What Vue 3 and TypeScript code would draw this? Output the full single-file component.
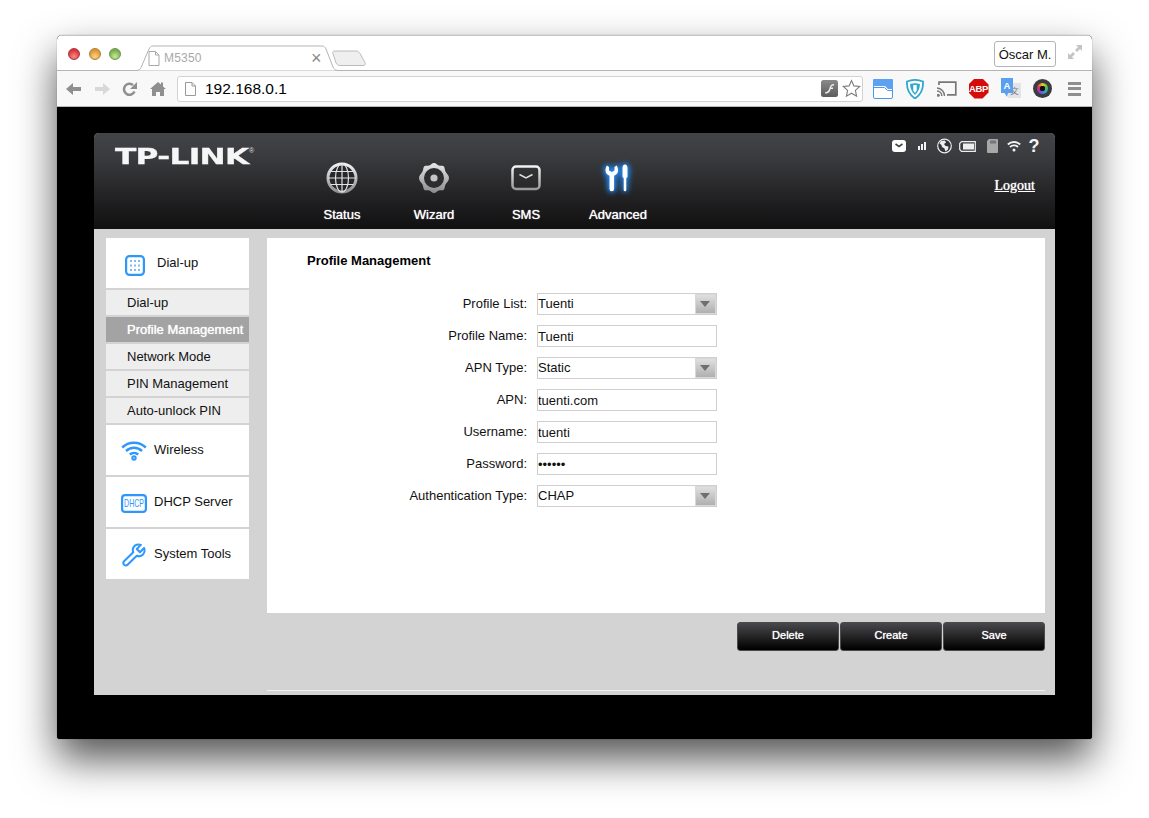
<script setup lang="ts">
const navItems = ['Status', 'Wizard', 'SMS', 'Advanced']
const subItems = ['Dial-up', 'Profile Management', 'Network Mode', 'PIN Management', 'Auto-unlock PIN']
const fields = [
  { label: 'Profile List:', value: 'Tuenti', kind: 'select' },
  { label: 'Profile Name:', value: 'Tuenti', kind: 'text' },
  { label: 'APN Type:', value: 'Static', kind: 'select' },
  { label: 'APN:', value: 'tuenti.com', kind: 'text' },
  { label: 'Username:', value: 'tuenti', kind: 'text' },
  { label: 'Password:', value: 'tuenti', kind: 'password' },
  { label: 'Authentication Type:', value: 'CHAP', kind: 'select' },
]
const actions = ['Delete', 'Create', 'Save']
</script>

<template>
  <div class="stage">
    <div class="window">
      <div class="titlebar">
        <div class="lights">
          <span class="light red"></span>
          <span class="light amber"></span>
          <span class="light green"></span>
        </div>
        <div class="tab">
          <svg class="tab-shape" width="236" height="26" viewBox="0 0 236 26">
            <path d="M0 25.500H4c3 0 4-1 5-3L17 4c1-2 2-3 4-3H190c2 0 3 1 4 3l7 18c1 2 2 3.500 5 3.500H236" fill="#fff" stroke="#b4b4b4" />
            <path d="M207 6h17c2 0 3 1 4 2.500l5 9c.8 1.800 0 3-2 3h-23c-2 0-3-.8-4-2.500l-3-9.500c-.6-1.500 0-2.500 2-2.500z" fill="#efefef" stroke="#bcbcbc" />
          </svg>
          <svg class="tab-page" width="12" height="15" viewBox="0 0 12 15"><path d="M1 .5h6.500L11 4v10.500H1z M7.500 .5V4H11" fill="#fff" stroke="#a8a8a8" /></svg>
          <span class="tab-title">M5350</span>
          <span class="tab-close">×</span>
        </div>
        <div class="spacer"></div>
        <div class="profile">Óscar M.</div>
        <svg class="fs" width="16" height="16" viewBox="0 0 16 16">
          <path d="M9 1h6v6l-2-2-3 3-2-2 3-3z M7 15H1V9l2 2 3-3 2 2-3 3z" fill="#c4c4c4" />
        </svg>
      </div>

      <div class="toolbar">
        <svg class="tb" width="18" height="16" viewBox="0 0 18 16"><path d="M1 8l7-6v4h8v4H8v4z" fill="#8f8f8f" /></svg>
        <svg class="tb" width="18" height="16" viewBox="0 0 18 16"><path d="M17 8l-7-6v4H2v4h8v4z" fill="#d8d8d8" /></svg>
        <svg class="tb" width="18" height="16" viewBox="0 0 18 16"><path d="M13.500 10.500A5.500 5.500 0 1 1 12 4" fill="none" stroke="#8f8f8f" stroke-width="2.600" /><path d="M16 1v7h-7z" fill="#8f8f8f" /></svg>
        <svg class="tb" width="18" height="16" viewBox="0 0 18 16"><path d="M9 1l3 2.600V1.500h2v3.900L17 8h-2v7h-4v-4H7v4H3V8H1z" fill="#8f8f8f" /></svg>
        <div class="omnibox">
          <svg width="11" height="14" viewBox="0 0 11 14"><path d="M.5 .5h6.500L10.500 4v9.500H.5z M7 .5V4h3.500" fill="#fdfdfd" stroke="#9a9a9a" /></svg>
          <span class="url">192.168.0.1</span>
          <span class="spacer"></span>
          <svg width="17" height="17" viewBox="0 0 17 17">
            <defs><linearGradient id="fl" x1="0" y1="0" x2="0" y2="1"><stop offset="0" stop-color="#8a8a8a" /><stop offset="1" stop-color="#5c5c5c" /></linearGradient></defs>
            <rect width="17" height="17" rx="2.500" fill="url(#fl)" />
            <path d="M13 4c-3 0-4 2-4.500 4S7 12 4 12.500v1c4 0 5-2 5.600-4.500H12V7.500H10C10.400 6 11.400 5.500 13 5.500z" fill="#eee" />
          </svg>
          <svg class="star" width="19" height="19" viewBox="0 0 19 19"><path d="M9.500 1.500l2.400 5.400 5.800.6-4.300 3.900 1.200 5.800-5.100-3-5.100 3 1.200-5.800L1.300 7.500l5.800-.6z" fill="#fff" stroke="#7d7d7d" stroke-width="1.100" /></svg>
        </div>
        <div class="exts">
          <div class="ext">
            <svg width="20" height="20" viewBox="0 0 20 20">
              <rect x=".5" y=".5" width="19" height="19" rx="1.500" fill="#fff" stroke="#4a97ee" />
              <path d="M1 0h18a1 1 0 0 1 1 1v9h-5l-3-3H1.500L0 8V1a1 1 0 0 1 1-1z" fill="#5da2f1" />
              <path d="M.5 8.500H11.500l3 3H19.500" fill="none" stroke="#4a97ee" />
            </svg>
          </div>
          <div class="ext">
            <svg width="18" height="20" viewBox="0 0 18 20">
              <path d="M1 2.500C6 .5 12 .5 17 2.500c.5 7-2 13-8 17-6-4-8.500-10-8-17z" fill="#fff" stroke="#2fa8cf" stroke-width="1.800" />
              <path d="M4 5c3-.9 7-.9 10 0-.2 4.500-2 8.300-5 11-3-2.700-4.800-6.500-5-11z" fill="#2fa8cf" />
              <path d="M7.300 6h3.400v5.500L9 14l-1.700-2.500z" fill="#fff" />
            </svg>
          </div>
          <div class="ext">
            <svg width="20" height="16" viewBox="0 0 20 16"><path d="M2 4V1.200h16.800v12.600H10" fill="none" stroke="#777" stroke-width="1.700" /><path d="M0 7a8 8 0 0 1 7.500 8M0 10a5 5 0 0 1 4.800 5" fill="none" stroke="#777" stroke-width="1.400" /><circle cx="1.300" cy="14.300" r="1.500" fill="#777" /></svg>
          </div>
          <div class="ext">
            <div class="abp">ABP</div>
          </div>
          <div class="ext">
            <svg width="20" height="21" viewBox="0 0 20 21">
              <path d="M7 5h13v15H7z" fill="#e2e4e6" />
              <text x="13.500" y="16" font-size="8.500" fill="#777" text-anchor="middle" font-family="'Noto Sans CJK SC', sans-serif">文</text>
              <path d="M0 0h12v15H7l-1 4-2.500-4H0z" fill="#5a9ff0" />
              <text x="6" y="11" font-size="9.500" font-weight="700" fill="#fff" text-anchor="middle" font-family="'Liberation Sans', sans-serif">A</text>
            </svg>
          </div>
          <div class="ext">
            <div class="lens"><div class="lens-ring"></div></div>
          </div>
          <div class="ext">
            <div class="burger"><i></i><i></i><i></i></div>
          </div>
        </div>
      </div>

      <div class="viewport">
        <div class="router">
          <header class="head">
            <div class="logo"><span class="logo-text">TP-LINK</span><sup class="logo-r">®</sup></div>
            <nav class="nav">
              <div v-for="(item, i) in navItems" :key="item" class="nav-item">
                <div class="nav-icon">
                  <svg v-if="i === 0" width="32" height="32" viewBox="0 0 32 32">
                    <defs><linearGradient id="mt" x1="0" y1="0" x2="0" y2="1"><stop offset="0" stop-color="#f0f0f0" /><stop offset="1" stop-color="#8d8d8d" /></linearGradient></defs>
                    <circle cx="16" cy="16" r="14" fill="#27272a" stroke="url(#mt)" stroke-width="3" />
                    <g fill="none" stroke="#e2e2e2" stroke-width="1.200">
                      <ellipse cx="16" cy="16" rx="6.500" ry="14" />
                      <path d="M16 2v28M2 16h28M4.500 9.500h23M4.500 22.500h23" />
                    </g>
                  </svg>
                  <svg v-else-if="i === 1" width="32" height="32" viewBox="0 0 32 32">
                    <defs><linearGradient id="mw" x1="0" y1="0" x2="0" y2="1"><stop offset="0" stop-color="#e8e8e8" /><stop offset="1" stop-color="#8a8a8a" /></linearGradient></defs>
                    <path d="M16 1c2 0 3 2 5 2.500s4-.5 5 1 .5 3 1.500 5 3.500 3.500 3.500 6.500-2.500 4.500-3.500 6.500-.5 3.500-1.500 5-3 .5-5 1-3 2.500-5 2.500-3-2-5-2.500-4 .5-5-1-.5-3-1.500-5S1 19 1 16s2.500-4.500 3.500-6.500.5-3.500 1.500-5 3-.5 5-1 3-2.500 5-2.500z" fill="url(#mw)" />
                    <circle cx="16" cy="16" r="10" fill="#2d2d30" />
                    <circle cx="16" cy="16" r="3.600" fill="#c4c4c4" />
                  </svg>
                  <svg v-else-if="i === 2" width="30" height="26" viewBox="0 0 30 26">
                    <defs><linearGradient id="ms" x1="0" y1="0" x2="0" y2="1"><stop offset="0" stop-color="#f2f2f2" /><stop offset="1" stop-color="#9a9a9a" /></linearGradient></defs>
                    <rect x="1.500" y="1.500" width="27" height="22.500" rx="3.500" fill="none" stroke="url(#ms)" stroke-width="2.500" />
                    <path d="M8.500 9.500L15 13l6.500-3.500" fill="none" stroke="#e0e0e0" stroke-width="1.500" />
                  </svg>
                  <svg v-else class="glow" width="26" height="28" viewBox="0 0 26 28">
                    <path d="M2 1.500C.8 3 .5 5 .5 6.500c0 2.500 1.500 4.300 4 5.200V25a2.300 2.300 0 0 0 4.600 0V11.700c2.500-.9 4-2.700 4-5.200 0-1.500-.3-3.500-1.500-5L9.500 3v3.500L6.800 8 4 6.500V3z" fill="#fff" />
                    <path d="M17.500 4c0-2 1-3.500 2.500-3.500S22.500 2 22.500 4v8.500c0 .8-.4 1.300-1.200 1.500v12a1.300 1.300 0 0 1-2.600 0V14c-.8-.2-1.200-.7-1.200-1.500z" fill="#fff" />
                  </svg>
                </div>
                <span class="nav-label">{{ item }}</span>
              </div>
            </nav>
            <div class="head-right">
              <div class="status-icons">
                <svg width="14" height="12" viewBox="0 0 14 12"><rect width="14" height="12" rx="3" fill="#fff" /><path d="M3.500 4L7 6.500 10.500 4" fill="none" stroke="#444" stroke-width="1.600" /></svg>
                <svg class="st-sig" width="8" height="8" viewBox="0 0 8 8"><path d="M0 4h2v4H0zM3 2h2v6H3zM6 0h2v8H6z" fill="#f2f2f2" /></svg>
                <svg class="st-globe" width="15" height="16" viewBox="0 0 15 16"><circle cx="7.500" cy="8" r="6.800" fill="#33343a" stroke="#eee" stroke-width="1.200" /><path d="M4 3l4-.5 1 2-2 1.500 1.500 2 3 .5-.5 3-2.500 2-1-3-2.500-1.500-.5-2-2-1.500z" fill="#eee" /></svg>
                <svg class="st-bat" width="17" height="11" viewBox="0 0 17 11"><path d="M2.500 .7h13.800v9.600H2.500L.7 8.500v-6z" fill="none" stroke="#eee" stroke-width="1.200" /><rect x="4" y="2.500" width="11" height="6" fill="#eee" /></svg>
                <svg class="st-sd" width="11" height="14" viewBox="0 0 11 14"><path d="M2 0h8a1 1 0 0 1 1 1v12a1 1 0 0 1-1 1H1a1 1 0 0 1-1-1V2z" fill="#a8a8a8" /><path d="M4 1.500v3M6 1.500v3M8 1.500v3" stroke="#3b3b3f" stroke-width=".9" /></svg>
                <svg class="st-wifi" width="14" height="12" viewBox="0 0 14 12"><path d="M.8 4.500a9 9 0 0 1 12.400 0M3 7a5.800 5.800 0 0 1 8 0" fill="none" stroke="#f2f2f2" stroke-width="1.800" /><circle cx="7" cy="10" r="1.500" fill="#f2f2f2" /></svg>
                <span class="st-q">?</span>
              </div>
              <a class="logout">Logout</a>
            </div>
          </header>

          <div class="body">
            <aside class="side">
              <div class="side-head first">
                <svg class="ic-dial" width="20" height="21" viewBox="0 0 20 21">
                  <rect x="1.100" y="1.100" width="17.800" height="18.800" rx="3.500" fill="#fff" stroke="#2e97fb" stroke-width="2.200" />
                  <g fill="#7dbcf6">
                    <rect x="5" y="5" width="2" height="2" /><rect x="9" y="5" width="2" height="2" /><rect x="13" y="5" width="2" height="2" />
                    <rect x="5" y="9.500" width="2" height="2" /><rect x="9" y="9.500" width="2" height="2" /><rect x="13" y="9.500" width="2" height="2" />
                    <rect x="5" y="14" width="2" height="2" /><rect x="9" y="14" width="2" height="2" /><rect x="13" y="14" width="2" height="2" />
                  </g>
                </svg>
                <span class="first-label">Dial-up</span>
              </div>
              <div v-for="s in subItems" :key="s" class="sub" :class="{ active: s === 'Profile Management' }">{{ s }}</div>
              <div class="side-head">
                <svg class="ic" width="26" height="22" viewBox="0 0 26 22">
                  <g fill="none" stroke="#2e97fb" stroke-width="2.500">
                    <path d="M1.200 8.500a17 17 0 0 1 23.600 0" />
                    <path d="M5 12a11.500 11.500 0 0 1 16 0" />
                    <path d="M8.800 15.500a6.300 6.300 0 0 1 8.400 0" />
                    <circle cx="13" cy="19" r="1.700" stroke-width="2" />
                  </g>
                </svg>
                <span>Wireless</span>
              </div>
              <div class="side-head">
                <svg class="ic dhcp" width="26" height="19" viewBox="0 0 26 19">
                  <rect x="1.100" y="1.100" width="23.800" height="16.800" rx="3" fill="#fff" stroke="#2e97fb" stroke-width="2.200" />
                  <text transform="translate(13 12.800) scale(.7 1)" text-anchor="middle" font-size="10" fill="#2e97fb" font-family="'Liberation Sans', sans-serif">DHCP</text>
                </svg>
                <span>DHCP Server</span>
              </div>
              <div class="side-head">
                <svg class="ic tool" width="24" height="24" viewBox="0 0 26 26">
                  <path d="M24 5.500l-4.500 4.500-3.500-3.500L20.500 2c-3-1-6.500 0-8 2.500-1 1.800-1 3.800-.3 5.500L2.500 19.500c-1.300 1.300-1.300 2.800-.2 4 1.200 1.100 2.800 1.100 4-.2L16 13.800c1.800.7 3.800.7 5.500-.3 2.500-1.500 3.500-5 2.500-8z" fill="#fff" stroke="#2e97fb" stroke-width="2.200" stroke-linejoin="round" />
                </svg>
                <span>System Tools</span>
              </div>
            </aside>

            <div class="content">
              <main class="panel">
                <h1 class="title">Profile Management</h1>
                <div class="form">
                  <template v-for="f in fields" :key="f.label">
                    <label class="flabel">{{ f.label }}</label>
                    <div v-if="f.kind === 'select'" class="control select">
                      <span class="val">{{ f.value }}</span>
                      <span class="arrow"></span>
                    </div>
                    <input v-else class="control input" :type="f.kind" :value="f.value" readonly />
                  </template>
                </div>
              </main>
              <div class="actions">
                <button v-for="a in actions" :key="a" class="btn" type="button">{{ a }}</button>
              </div>
              <div class="rule"></div>
            </div>
          </div>
        </div>
      </div>
    </div>
  </div>
</template>

<style>
html, body { margin: 0; background: #fff; }
</style>

<style scoped>
.stage {
  width: 1149px;
  height: 818px;
  padding: 35px 57px 79px 57px;
  box-sizing: border-box;
  overflow: hidden;
  font-family: "Liberation Sans", Arial, sans-serif;
  font-size: 13px;
  color: #111;
}
.window {
  width: 1035px;
  height: 704px;
  border-radius: 5px 5px 3px 3px;
  box-shadow: 0 20px 40px rgba(0, 0, 0, 0.68), 0 0 1px rgba(0, 0, 0, 0.5);
  display: flex;
  flex-direction: column;
  overflow: hidden;
  background: #000;
}
.spacer { flex: 1; }

.titlebar {
  height: 36px;
  flex: none;
  background: #fff;
  border-top: 1px solid #c4c4c4;
  box-sizing: border-box;
  display: flex;
  align-items: flex-start;
  position: relative;
  box-shadow: inset 0 -1px 0 #b4b4b4;
}
.lights { display: flex; gap: 8.500px; padding: 12px 0 0 11px; width: 64px; box-sizing: border-box; flex: none; }
.light {
  width: 12px;
  height: 12px;
  border-radius: 50%;
  box-sizing: border-box;
  flex: none;
}
.red { background: radial-gradient(circle at 50% 75%, #fb8a8a, #d8333a 70%); border: 1px solid #a8383c; }
.amber { background: radial-gradient(circle at 50% 75%, #fcd38a, #dd9530 70%); border: 1px solid #a9813a; }
.green { background: radial-gradient(circle at 50% 75%, #c9e89a, #78ac4c 70%); border: 1px solid #6f9552; }
.tab {
  width: 236px;
  height: 26px;
  margin: 9px 0 0 11px;
  position: relative;
  display: flex;
  align-items: center;
  flex: none;
}
.tab-shape { position: absolute; left: 0; top: 0; }
.tab-page { position: relative; margin-left: 16px; }
.tab-title { position: relative; margin-left: 4px; font-size: 12px; color: #a9a9a9; letter-spacing: 0.2px; }
.tab-close { position: absolute; left: 179px; top: 3px; font-size: 18px; line-height: 20px; color: #888; }
.profile {
  width: 62px;
  height: 26px;
  margin-top: 5px;
  border: 1px solid #b4b4b4;
  border-radius: 3px;
  box-sizing: border-box;
  font-size: 13px;
  line-height: 25px;
  text-align: center;
  color: #111;
  background: #fff;
}
.fs { margin: 8px 9px 0 11px; }

.toolbar {
  height: 36px;
  flex: none;
  background: #f8f8f8;
  border-bottom: 1px solid #b8b8b8;
  box-sizing: border-box;
  display: flex;
  align-items: center;
  padding-left: 8px;
}
.tb { margin-right: 10px; flex: none; }
.omnibox {
  width: 686px;
  height: 26px;
  flex: none;
  background: #fff;
  border: 1px solid #d2d2d2;
  border-radius: 3px;
  box-sizing: border-box;
  display: flex;
  align-items: center;
  padding: 0 1px 0 7px;
}
.url { margin-left: 9px; font-size: 15.500px; color: #000; }
.star { margin: 0 0 0 4px; }
.exts { display: flex; margin-left: 3.500px; }
.ext {
  width: 32px;
  flex: none;
  display: flex;
  justify-content: center;
  align-items: center;
}
.abp {
  width: 20px;
  height: 20px;
  background: #d40c0c;
  clip-path: polygon(30% 0, 70% 0, 100% 30%, 100% 70%, 70% 100%, 30% 100%, 0 70%, 0 30%);
  color: #fff;
  font-size: 9.500px;
  font-weight: 700;
  line-height: 20px;
  text-align: center;
  letter-spacing: -0.3px;
}
.lens {
  width: 19px;
  height: 19px;
  border-radius: 50%;
  background: #3a3c42;
  display: flex;
  align-items: center;
  justify-content: center;
}
.lens-ring {
  width: 11px;
  height: 11px;
  border-radius: 50%;
  box-sizing: border-box;
  background:
    radial-gradient(circle, #111 0 2.500px, transparent 3px),
    conic-gradient(#f3c91f, #54c43a, #22a6d8, #8d3bd0, #e0305a, #f3c91f);
}
.burger { display: flex; flex-direction: column; gap: 2.500px; }
.burger i { display: block; width: 13px; height: 3px; background: #8e8e8e; }

.viewport {
  flex: 1;
  background: #000;
  padding: 26px 37px 44px 37px;
  min-height: 0;
}
.router {
  height: 562px;
  width: 961px;
  display: flex;
  flex-direction: column;
  background: #d3d3d3;
  border-radius: 5px 5px 0 0;
  overflow: hidden;
}
.head {
  height: 96px;
  flex: none;
  background: linear-gradient(#434448 0%, #3a3b3e 25%, #232325 65%, #101011 100%);
  position: relative;
  display: flex;
}
.logo { width: 202px; flex: none; padding: 13px 0 0 21px; box-sizing: border-box; position: relative; }
.logo-text {
  display: inline-block;
  font-family: "DejaVu Sans", sans-serif;
  font-weight: 700;
  font-size: 22px;
  line-height: 22px;
  color: #f6f6f6;
  transform: scaleX(1.42);
  transform-origin: left center;
  letter-spacing: -0.5px;
  -webkit-text-stroke: 0.3px #f6f6f6;
}
.logo-r { position: absolute; left: 155px; top: 14px; font-size: 7px; color: #ddd; line-height: 8px; }
.nav { display: flex; }
.nav-item {
  width: 92px;
  display: flex;
  flex-direction: column;
  align-items: center;
}
.nav-icon { height: 32px; margin-top: 29px; display: flex; align-items: center; justify-content: center; }
.glow { filter: drop-shadow(0 0 3px #1f8fff) drop-shadow(0 0 2px #1f8fff); }
.nav-label {
  margin-top: 13px;
  color: #fff;
  font-size: 13px;
  line-height: 16px;
  text-shadow: 0 0 1px #fff;
}
.head-right {
  position: absolute;
  right: 0;
  top: 0;
  width: 170px;
  height: 96px;
}
.status-icons {
  display: flex;
  align-items: center;
  justify-content: flex-end;
  height: 16px;
  padding: 5px 15px 0 0;
}
.st-sig { margin-left: 12px; }
.st-globe { margin-left: 11px; }
.st-bat { margin-left: 7px; }
.st-sd { margin-left: 11px; }
.st-wifi { margin-left: 9px; }
.st-q { margin-left: 7px; color: #f4f4f4; font-weight: 700; font-size: 18px; line-height: 16px; width: 12px; text-align: center; }
.logout {
  position: absolute;
  right: 20px;
  top: 45px;
  font-family: "Liberation Serif", serif;
  font-size: 14px;
  line-height: 16px;
  color: #fff;
  text-decoration: underline;
  text-shadow: 0 0 1px #fff;
}

.body {
  flex: 1;
  display: flex;
  padding: 9px 10px 0 12px;
  gap: 18px;
  min-height: 0;
}
.side { width: 143px; flex: none; display: flex; flex-direction: column; gap: 2px; }
.side-head {
  height: 50px;
  flex: none;
  background: #fff;
  display: flex;
  align-items: center;
  padding-left: 15px;
  box-sizing: border-box;
}
.ic { flex: none; margin-right: 7px; }
.tool { margin-left: 1px; margin-right: 8px; margin-top: 2px; }
.dhcp { margin-top: 2px; }
.side-head span { line-height: 16px; }
.first { padding-left: 19px; }
.ic-dial { margin: 4px 12px 0 0; flex: none; }
.side-head .first-label { margin-top: -1px; }
.sub {
  height: 25px;
  flex: none;
  background: #eee;
  padding-left: 21px;
  line-height: 25px;
  color: #111;
}
.sub.active { background: #a3a3a3; color: #fff; text-shadow: 0 0 1px #fff; }

.content { flex: 1; min-width: 0; display: flex; flex-direction: column; }
.panel {
  height: 375px;
  flex: none;
  background: #fff;
  padding: 15px 0 0 40px;
  box-sizing: border-box;
}
.title { margin: 0; font-size: 13px; line-height: 16px; font-weight: 700; color: #000; }
.form {
  margin: 24px 0 0 -40px;
  display: grid;
  grid-template-columns: 260px 180px;
  column-gap: 10px;
  row-gap: 10px;
  grid-auto-rows: 22px;
  align-items: center;
}
.flabel { text-align: right; line-height: 22px; color: #111; }
.control {
  height: 22px;
  width: 180px;
  border: 1px solid #cfcfcf;
  box-sizing: border-box;
  background: #fff;
  font: 13px "Liberation Sans", Arial, sans-serif;
  color: #111;
}
.input { padding: 0; outline: none; display: block; }
.select { display: flex; align-items: center; justify-content: space-between; }
.val { line-height: 20px; }
.arrow {
  width: 21px;
  height: 20px;
  background: linear-gradient(#e2e2e2, #adadad);
  box-shadow: inset 0 0 0 1px #d8d8d8;
  position: relative;
}
.arrow::after {
  content: "";
  position: absolute;
  left: 5px;
  top: 7px;
  border-left: 5.500px solid transparent;
  border-right: 5.500px solid transparent;
  border-top: 6px solid #6f6f6f;
}
.actions { display: flex; justify-content: flex-end; gap: 1px; margin-top: 9px; }
.btn {
  width: 102px;
  height: 29px;
  padding: 0 0 3px;
  border: 1px solid #4a4a4c;
  border-radius: 3px;
  background: linear-gradient(#47484c 0%, #2c2c2e 40%, #0a0a0a 85%, #000 100%);
  color: #fff;
  font: 11px/20px "Liberation Sans", Arial, sans-serif;
  text-shadow: 0 0 1px #fff;
}
.rule { height: 1px; background: #f2f2f2; margin-top: 39px; }
</style>
